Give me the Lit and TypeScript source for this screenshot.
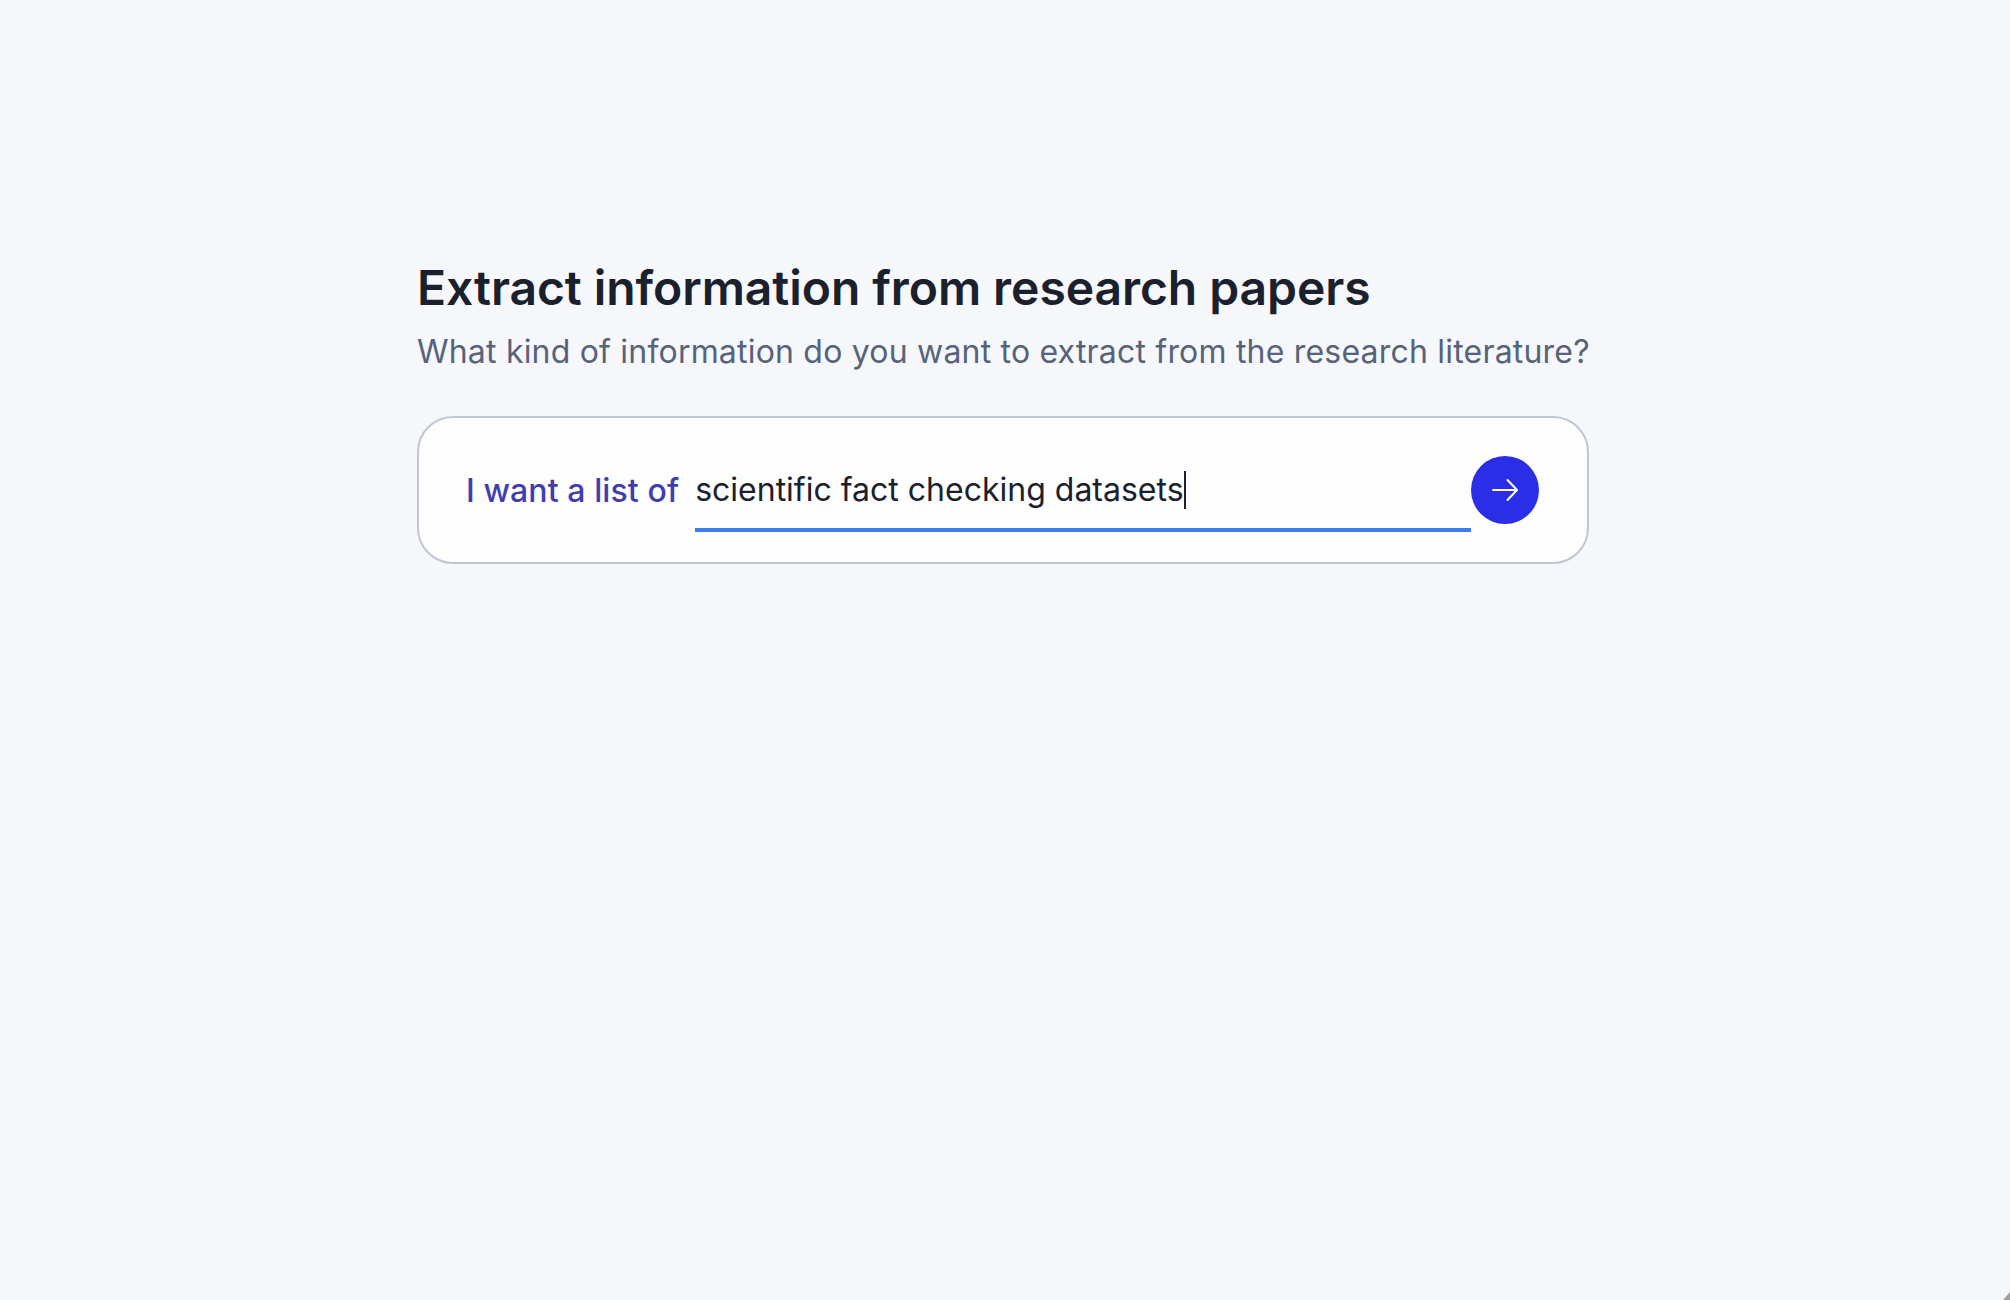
import { LitElement, html, css } from "lit";
import { customElement } from "lit/decorators.js";

@customElement("app-root")
export class AppRoot extends LitElement {
  static styles = css`
    :host {
      display: block;
      height: 1300px;
      overflow: hidden;
      background: #f5f7fa;
      font-family: Inter, "Noto Sans", sans-serif;
      position: relative;
    }
    .page {
      box-sizing: border-box;
      height: 100%;
      padding: 258px 0 0 417px;
    }
    .col {
      width: 1172px;
      display: flex;
      flex-direction: column;
    }
    h1 {
      margin: 0;
      font-size: 48px;
      line-height: 60px;
      font-weight: 600;
      letter-spacing: -0.06px;
      color: #1a202c;
    }
    .sub {
      margin: 9px 0 0;
      font-size: 32px;
      line-height: 50px;
      font-weight: 400;
      letter-spacing: 0.2px;
      color: #56637a;
      white-space: nowrap;
    }
    .card {
      box-sizing: border-box;
      margin-top: 39px;
      height: 148px;
      border: 2px solid #c0c7d3;
      border-radius: 36px;
      background: #fdfdfe;
      display: flex;
      align-items: center;
      padding: 0 48px 0 47px;
    }
    .label {
      font-size: 32px;
      font-weight: 500;
      letter-spacing: 0.1px;
      color: #403eae;
      white-space: nowrap;
      margin-right: 16px;
    }
    .field {
      flex: 1;
      box-sizing: border-box;
      height: 76px;
      margin-top: 7px;
      border-bottom: 4px solid #3b7ded;
      padding-bottom: 4px;
      font-size: 32px;
      color: #1a202c;
      display: flex;
      align-items: center;
      white-space: nowrap;
    }
    .caret {
      display: inline-block;
      width: 2px;
      height: 38px;
      background: #1a202c;
    }
    button {
      flex: none;
      width: 68px;
      height: 68px;
      border: none;
      padding: 0;
      border-radius: 50%;
      background: #2a2ee6;
      display: flex;
      align-items: center;
      justify-content: center;
    }
    svg {
      display: block;
    }
    .corner {
      position: absolute;
      right: 0;
      bottom: 0;
    }
  `;

  render() {
    return html`
      <div class="page">
        <div class="col">
          <h1>Extract information from research papers</h1>
          <p class="sub">What kind of information do you want to extract from the research literature?</p>
          <div class="card">
            <span class="label">I want a list of</span>
            <div class="field">scientific fact checking datasets<span class="caret"></span></div>
            <button aria-label="Submit">
              <svg width="28" height="28" viewBox="0 0 28 28" fill="none" stroke="#fff" stroke-width="2" stroke-linecap="round" stroke-linejoin="round">
                <path d="M2 14h24M16.5 4l9.5 10-9.5 10" />
              </svg>
            </button>
          </div>
        </div>
      </div>
      <svg class="corner" width="8" height="8" viewBox="0 0 8 8"><path d="M8 0v8H1z" fill="#9aa0a8" /></svg>
    `;
  }
}
